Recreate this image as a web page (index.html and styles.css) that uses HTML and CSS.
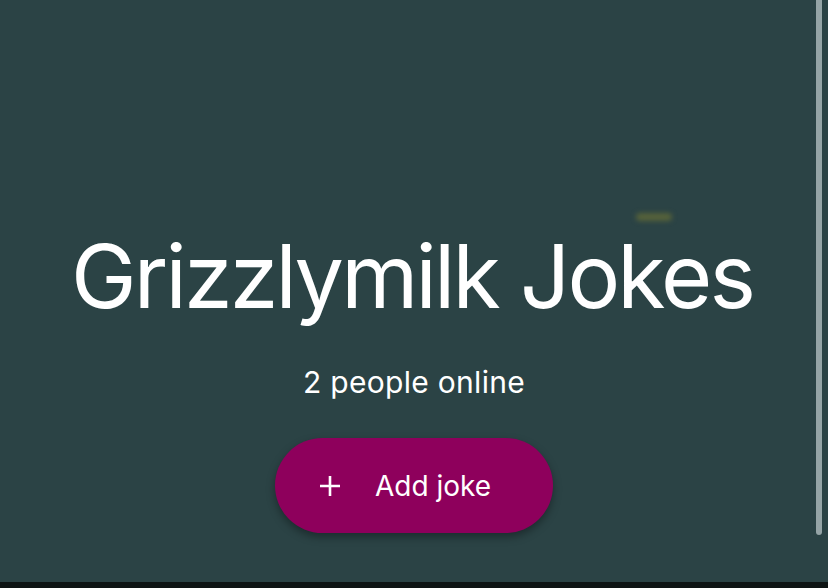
FILE: index.html
```html
<!DOCTYPE html>
<html lang="en">
<head>
  <meta charset="UTF-8">
  <meta name="viewport" content="width=device-width, initial-scale=1.0">
  <title>Grizzlymilk Jokes</title>
  <link rel="stylesheet" href="styles.css">
</head>
<body>

  <!-- Hero -->
  <main class="hero">
    <span class="glow"></span>
    <h1 class="title">Grizzlymilk Jokes</h1>
    <p class="online">2 people online</p>
    <button class="add-btn" type="button">
      <svg class="plus" width="22" height="22" viewBox="0 0 22 22" aria-hidden="true">
        <path d="M11 1v20M1 11h20" stroke="#fff" stroke-width="2.6" fill="none"/>
      </svg>
      <span>Add joke</span>
    </button>
    <div class="scrollbar"></div>
  </main>

  <!-- Bottom edge -->
  <footer class="bottom-bar"></footer>

</body>
</html>
```

FILE: styles.css
```css
* {
  margin: 0;
  padding: 0;
  box-sizing: border-box;
}

html, body {
  height: 100%;
}

body {
  font-family: Inter, 'Liberation Sans', sans-serif;
  background: #2b4345;
  color: #fff;
  display: flex;
  flex-direction: column;
  overflow: hidden;
}

/* Hero */
.hero {
  position: relative;
  flex: 1;
  display: flex;
  flex-direction: column;
  align-items: center;
  padding-top: 232px;
}

.title {
  font-size: 88px;
  font-weight: 400;
  line-height: 1;
  letter-spacing: -2.8px;
  padding-right: 4px;
}

.online {
  margin-top: 47px;
  font-size: 30px;
  line-height: 1;
  letter-spacing: 0.3px;
}

.add-btn {
  margin-top: 41px;
  width: 278px;
  height: 95px;
  border: none;
  border-radius: 48px;
  background: #8e005c;
  color: #fff;
  font-family: Inter, sans-serif;
  font-size: 28px;
  display: flex;
  align-items: center;
  justify-content: center;
  gap: 34px;
  padding-right: 18px;
  box-shadow: 0 4px 8px rgba(0, 0, 0, 0.35);
  cursor: pointer;
}

/* Blurred blob behind the title */
.glow {
  position: absolute;
  left: 636px;
  top: 213px;
  width: 36px;
  height: 8px;
  border-radius: 4px;
  background: #56623a;
  filter: blur(2.5px);
}

/* Overlay scrollbar */
.scrollbar {
  position: absolute;
  top: 0;
  right: 6px;
  width: 6px;
  height: 535px;
  border-radius: 0 0 3px 3px;
  background: #95a4a6;
}

.bottom-bar {
  height: 6px;
  background: #0e1414;
}
```
